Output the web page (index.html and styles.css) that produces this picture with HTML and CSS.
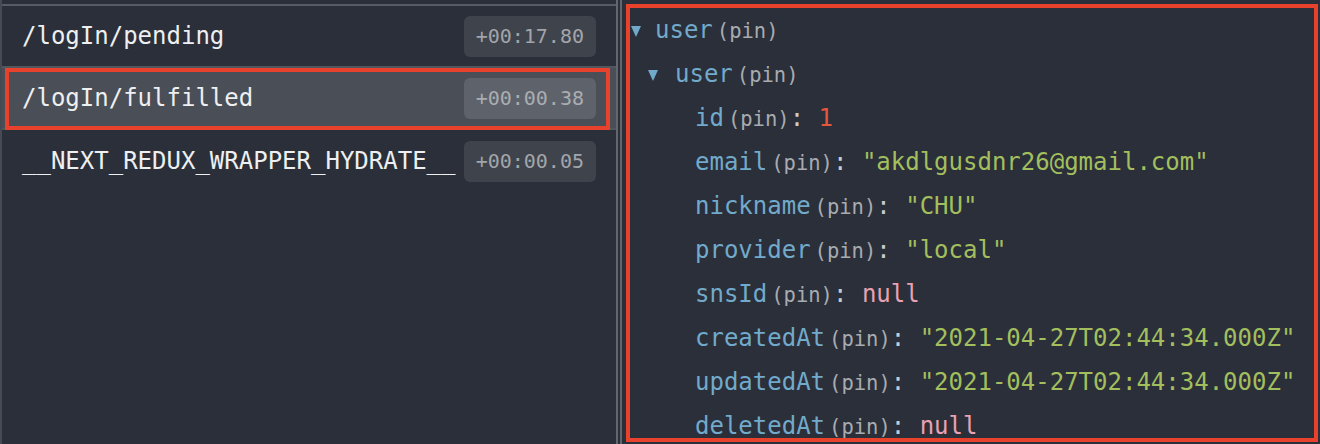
FILE: index.html
```html
<html>
    <head>
        <meta charset="UTF-8" />
        <link rel="stylesheet" href="styles.css">
    </head>
    <body>
        <div class="actions">
            <div class="action_list">
                <div class="action">
                    <span class="action_name">/logIn/pending</span>
                    <span class="action_time">+00:17.80</span>
                </div>
                <div class="action selected">
                    <span class="action_name">/logIn/fulfilled</span>
                    <span class="action_time">+00:00.38</span>
                </div>
                <div class="action">
                    <span class="action_name">__NEXT_REDUX_WRAPPER_HYDRATE__</span>
                    <span class="action_time">+00:00.05</span>
                </div>
            </div>
        </div>
        <div class="splitter"></div>
        <div class="state">
            <ul class="tree">
                <li>
                    <div class="row"><span class="arrow"></span><span class="key">user</span><span class="pin">(pin)</span></div>
                    <ul class="level2">
                        <li>
                            <div class="row"><span class="arrow"></span><span class="key">user</span><span class="pin">(pin)</span></div>
                            <ul class="leaves">
                                <li class="row"><span class="key">id</span><span class="pin">(pin)</span><span class="colon">:</span> <span class="num">1</span></li>
                                <li class="row"><span class="key">email</span><span class="pin">(pin)</span><span class="colon">:</span> <span class="str">"akdlgusdnr26@gmail.com"</span></li>
                                <li class="row"><span class="key">nickname</span><span class="pin">(pin)</span><span class="colon">:</span> <span class="str">"CHU"</span></li>
                                <li class="row"><span class="key">provider</span><span class="pin">(pin)</span><span class="colon">:</span> <span class="str">"local"</span></li>
                                <li class="row"><span class="key">snsId</span><span class="pin">(pin)</span><span class="colon">:</span> <span class="null">null</span></li>
                                <li class="row"><span class="key">createdAt</span><span class="pin">(pin)</span><span class="colon">:</span> <span class="str">"2021-04-27T02:44:34.000Z"</span></li>
                                <li class="row"><span class="key">updatedAt</span><span class="pin">(pin)</span><span class="colon">:</span> <span class="str">"2021-04-27T02:44:34.000Z"</span></li>
                                <li class="row"><span class="key">deletedAt</span><span class="pin">(pin)</span><span class="colon">:</span> <span class="null">null</span></li>
                            </ul>
                        </li>
                    </ul>
                </li>
            </ul>
        </div>
    </body>
</html>
```

FILE: styles.css
```css
* {
    box-sizing: border-box;
}
body {
    margin: 0;
    height: 444px;
    overflow: hidden;
    display: flex;
    background: #2a2f3a;
    font-family: "DejaVu Sans Mono", "Liberation Mono", monospace;
    color: #eeeff1;
}

.actions {
    width: 616px;
    flex: none;
    border-left: 2px solid #464a53;
    padding-top: 4px;
}

.action_list {
    border-top: 2px solid #575b63;
}

.action {
    position: relative;
    height: 62px;
    display: flex;
    align-items: center;
    justify-content: space-between;
    padding: 0 20px;
    border-bottom: 2px solid #52565e;
    font-size: 24px;
}

.action:last-child {
    border-bottom: none;
}

.action.selected {
    background: #4a4e57;
}

.action.selected::after {
    content: "";
    position: absolute;
    left: 3px;
    right: 6px;
    top: 0;
    bottom: -2px;
    border: 4px solid #e8412c;
}

.action_time {
    font-size: 20px;
    line-height: 29px;
    padding: 6px 12px;
    border-radius: 6px;
    background: #3f434c;
    color: #a2a5aa;
}

.selected .action_time {
    background: #5e626a;
    color: #aaadb2;
}

.splitter {
    width: 6px;
    flex: none;
    border-left: 2px solid #62666d;
    border-right: 2px solid #62666d;
}

.state {
    position: relative;
    flex: 1;
    padding: 8px 0 0 9px;
}

.state::after {
    content: "";
    position: absolute;
    left: 4px;
    top: 4px;
    right: 2px;
    bottom: 2px;
    border: 4px solid #e8412c;
}

.tree, .tree ul {
    list-style: none;
    margin: 0;
    padding: 0;
}

.tree .level2 {
    padding-left: 17px;
}

.tree .leaves {
    padding-left: 47px;
}

.row {
    height: 44px;
    line-height: 44px;
    font-size: 24px;
    white-space: nowrap;
}

.arrow {
    display: inline-block;
    width: 0;
    height: 0;
    border-left: 5.5px solid transparent;
    border-right: 5.5px solid transparent;
    border-top: 11px solid #70a9ca;
    margin-right: 14px;
    vertical-align: 1px;
}

.level2 .arrow {
    margin-right: 17px;
}

.key {
    color: #72aacb;
}

.pin {
    font-size: 20.5px;
    margin-left: 4px;
    color: #a8abb0;
}

.colon {
    color: #c9cbcf;
}

.str {
    color: #a3bf5d;
}

.num {
    color: #e4573a;
}

.null {
    color: #e9a1b2;
}
```
